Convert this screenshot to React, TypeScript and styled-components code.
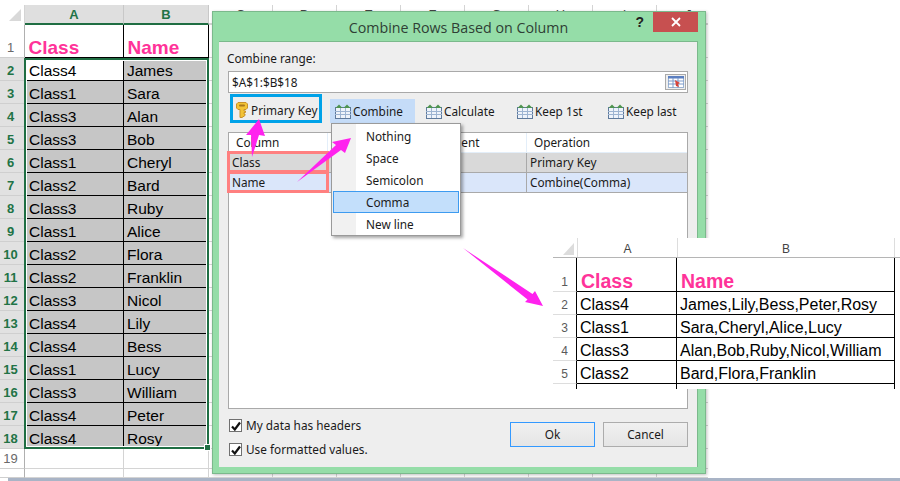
import React from 'react';
import styled, { createGlobalStyle } from 'styled-components';

const sheetRows = [
  ['Class4', 'James'], ['Class1', 'Sara'], ['Class3', 'Alan'], ['Class3', 'Bob'], ['Class1', 'Cheryl'],
  ['Class2', 'Bard'], ['Class3', 'Ruby'], ['Class1', 'Alice'], ['Class2', 'Flora'], ['Class2', 'Franklin'],
  ['Class3', 'Nicol'], ['Class4', 'Lily'], ['Class4', 'Bess'], ['Class1', 'Lucy'], ['Class3', 'William'],
  ['Class4', 'Peter'], ['Class4', 'Rosy'],
];
const resultRows = [
  ['Class4', 'James,Lily,Bess,Peter,Rosy'],
  ['Class1', 'Sara,Cheryl,Alice,Lucy'],
  ['Class3', 'Alan,Bob,Ruby,Nicol,William'],
  ['Class2', 'Bard,Flora,Franklin'],
];
const extraCols = ['C', 'D', 'E', 'F', 'G', 'H', 'I', 'J'];
const menuItems = ['Nothing', 'Space', 'Semicolon', 'Comma', 'New line'];

function TableIcon() {
  return (
    <svg width="16" height="16" viewBox="0 0 16 16">
      <rect x="0.5" y="4.5" width="15" height="11" fill="#eef3fa" stroke="#5f7a9c" />
      <path d="M0 8.5h16M0 11.5h16M5.5 5v10M10.5 5v10" stroke="#9db4d2" strokeWidth="1" />
      <path d="M0.5 5 L4 1.5 L7.5 5 Z M8.5 5 L12 1.5 L15.5 5 Z" fill="#4f9450" />
    </svg>
  );
}

function KeyIcon() {
  return (
    <svg width="12" height="16" viewBox="0 0 12 16">
      <path d="M0.5 2 L2 0.5 H10 L11.5 2 V6 L10 7.5 H8 V9 H9.5 V10.5 H8 V12 H9 V13.5 L6 15.5 H4 V7.5 H2 L0.5 6 Z" fill="#f2c335" stroke="#c8922a" strokeWidth="1" />
      <rect x="3" y="2.5" width="6" height="2" rx="1" fill="#a9781c" />
    </svg>
  );
}

function RangeIcon() {
  return (
    <svg width="16" height="12" viewBox="0 0 16 12">
      <rect x="0.5" y="0.5" width="15" height="11" fill="#fff" stroke="#9db4d2" />
      <rect x="0" y="0" width="16" height="2.5" fill="#5b7fc0" />
      <path d="M0 5h16M0 8h16M5 2v10M10 2v10" stroke="#7d9bcb" strokeWidth="1" />
      <path d="M7 4 L12 7 L10 8 L11 11 L8 10 Z" fill="#d8433a" />
    </svg>
  );
}

function CheckMark() {
  return (
    <svg width="10" height="10" viewBox="0 0 10 10">
      <path d="M1 5.5 L3.8 8.5 L9 1.5" fill="none" stroke="#111" strokeWidth="2.2" />
    </svg>
  );
}

export default function App() {
  return (
    <Page>
      <GlobalStyle />

      <Sheet>
        <SheetRow>
          <CornerCell />
          <ColHead $active>A</ColHead>
          <ColHead $active>B</ColHead>
          {extraCols.map(c => <ColHead key={c}>{c}</ColHead>)}
        </SheetRow>
        <SheetRow $height={33}>
          <RowHead>1</RowHead>
          <TitleCell>Class</TitleCell>
          <TitleCell>Name</TitleCell>
          {extraCols.map(c => <EmptyCell key={c} />)}
        </SheetRow>
        {sheetRows.map((row, i) => (
          <SheetRow key={i} $height={23}>
            <RowHead $active>{i + 2}</RowHead>
            <DataCell $plain={i === 0}>{row[0]}</DataCell>
            <DataCell $narrow>{row[1]}</DataCell>
            {extraCols.map(c => <EmptyCell key={c} />)}
          </SheetRow>
        ))}
        <SheetRow $height={20}>
          <RowHead>19</RowHead>
          <EmptyCell />
          <EmptyCell />
          {extraCols.map(c => <EmptyCell key={c} />)}
        </SheetRow>
        <SheetRow $height={9}>
          <RowHead />
          <EmptyCell />
          <EmptyCell />
          {extraCols.map(c => <EmptyCell key={c} />)}
        </SheetRow>
        <Selection />
      </Sheet>
      <BottomBar />

      <Dialog>
        <TitleBar>
          <span />
          <TitleText>Combine Rows Based on Column</TitleText>
          <Controls>
            <HelpMark>?</HelpMark>
            <CloseBtn>
              <svg width="10" height="10" viewBox="0 0 10 10">
                <path d="M1 1 L9 9 M9 1 L1 9" stroke="#fff" strokeWidth="1.8" />
              </svg>
            </CloseBtn>
          </Controls>
        </TitleBar>

        <Panel>
          <RangeLabel>Combine range:</RangeLabel>
          <RangeInput>
            <span>$A$1:$B$18</span>
            <RangeBtn><RangeIcon /></RangeBtn>
          </RangeInput>

          <Toolbar>
            <KeyButton><KeyIcon />Primary Key</KeyButton>
            <ToolButton $active>
              <TableIcon />Combine
              <Menu>
                {menuItems.map(item => (
                  <MenuItem key={item} $selected={item === 'Comma'}>{item}</MenuItem>
                ))}
              </Menu>
            </ToolButton>
            <ToolButton><TableIcon />Calculate</ToolButton>
            <ToolButton><TableIcon />Keep 1st</ToolButton>
            <ToolButton><TableIcon />Keep last</ToolButton>
          </Toolbar>

          <ListTable>
            <ListHead>
              <HeadCell>Column</HeadCell>
              <HeadCell />
              <HeadCell>Element</HeadCell>
              <HeadCell $last>Operation</HeadCell>
            </ListHead>
            <ListRow $tone="#d9d9d9">
              <RowCell>Class<Marker /></RowCell>
              <RowCell />
              <RowCell />
              <RowCell>Primary Key</RowCell>
            </ListRow>
            <ListRow $tone="#dae6fa">
              <RowCell>Name<Marker /></RowCell>
              <RowCell />
              <RowCell />
              <RowCell>Combine(Comma)</RowCell>
            </ListRow>
          </ListTable>

          <Footer>
            <Options>
              <OptionRow><CheckBox><CheckMark /></CheckBox>My data has headers</OptionRow>
              <OptionRow><CheckBox><CheckMark /></CheckBox>Use formatted values.</OptionRow>
            </Options>
            <Buttons>
              <DialogButton $focused>Ok</DialogButton>
              <DialogButton>Cancel</DialogButton>
            </Buttons>
          </Footer>
        </Panel>
      </Dialog>

      <Result>
        <ResultHead>
          <ResultCorner />
          <ResultCol>A</ResultCol>
          <ResultCol>B</ResultCol>
        </ResultHead>
        <ResultRow $height={34}>
          <ResultNum>1</ResultNum>
          <ResultTitle>Class</ResultTitle>
          <ResultTitle>Name</ResultTitle>
        </ResultRow>
        {resultRows.map((row, i) => (
          <ResultRow key={i} $height={23}>
            <ResultNum>{i + 2}</ResultNum>
            <ResultCell>{row[0]}</ResultCell>
            <ResultCell>{row[1]}</ResultCell>
          </ResultRow>
        ))}
        <ResultRow $height={5}>
          <ResultNum $open />
          <ResultCell $open />
          <ResultCell $open />
        </ResultRow>
      </Result>

      <Arrows viewBox="0 0 900 481">
        <polygon points="252,157 251,135 246,135 259,119 265,136 259,135" />
        <polygon points="297,182 336,145 332,142 351,138 345,153 341,150" />
        <polygon points="463,248 532.5,294 535,291 543,306 525,302 527.5,299.5" />
      </Arrows>
    </Page>
  );
}

const GlobalStyle = createGlobalStyle`
  html, body {
    margin: 0;
    padding: 0;
    background: #ffffff;
  }
`

const Page = styled.div`
  position: relative;
  width: 900px;
  height: 481px;
  overflow: hidden;
  background: #ffffff;
  font-family: "Liberation Sans", Arial, sans-serif;
`

const Sheet = styled.div`
  position: relative;
  width: 708px;
  height: 473px;
  padding-top: 5px;
  overflow: hidden;
`

const BottomBar = styled.div`
  height: 3px;
  margin-left: 8px;
  background: #a9b4c6;
`

const SheetRow = styled.div<{ $height?: number }>`
  display: grid;
  grid-template-columns: 25px 99px 85px repeat(8, 64px);
  height: ${p => (p.$height ? `${p.$height}px` : '20px')};
`

const CornerCell = styled.div`
  position: relative;
  background: #ffffff;
  border-right: 1px solid #d4d4d4;

  &::after {
    content: "";
    position: absolute;
    left: 9px;
    top: 4px;
    width: 12px;
    height: 12px;
    background: #d9d9d9;
    clip-path: polygon(100% 0, 100% 100%, 0 100%);
  }
`

const ColHead = styled.div<{ $active?: boolean }>`
  display: flex;
  align-items: center;
  justify-content: center;
  box-sizing: border-box;
  font-size: 13px;
  font-weight: ${p => (p.$active ? 'bold' : 'normal')};
  color: ${p => (p.$active ? '#217346' : '#444444')};
  background: ${p => (p.$active ? '#dfdfdf' : '#ffffff')};
  border-right: 1px solid ${p => (p.$active ? '#c8c8c8' : '#d4d4d4')};
  border-bottom: 2px solid ${p => (p.$active ? '#1f6e43' : '#d4d4d4')};
`

const RowHead = styled.div<{ $active?: boolean }>`
  display: flex;
  align-items: flex-end;
  justify-content: center;
  box-sizing: border-box;
  padding-right: 3px;
  font-size: 13px;
  line-height: 19px;
  font-weight: ${p => (p.$active ? 'bold' : 'normal')};
  color: ${p => (p.$active ? '#217346' : '#6a6a6a')};
  background: ${p => (p.$active ? '#e1e1e1' : '#ffffff')};
  border-right: 1px solid #b0b0b0;
  border-bottom: 1px solid #cfcfcf;
`

const TitleCell = styled.div`
  display: flex;
  align-items: flex-end;
  box-sizing: border-box;
  padding-left: 3.5px;
  font-size: 19px;
  font-weight: bold;
  line-height: 18px;
  color: #ff3399;
  background: #ffffff;
  border-right: 1px solid #000000;
  border-bottom: 1px solid #000000;
`

const DataCell = styled.div<{ $plain?: boolean; $narrow?: boolean }>`
  display: flex;
  align-items: center;
  box-sizing: border-box;
  padding-left: ${p => (p.$narrow ? '3px' : '4px')};
  padding-top: 4px;
  font-size: 15.5px;
  color: #000000;
  background: ${p => (p.$plain ? '#ffffff' : '#c6c6c6')};
  border-right: 1px solid #000000;
  border-bottom: 1px solid #000000;
`

const EmptyCell = styled.div`
  box-sizing: border-box;
  background: #ffffff;
  border-right: 1px solid #d4d4d4;
  border-bottom: 1px solid #d4d4d4;
`

const Selection = styled.div`
  position: absolute;
  left: 24px;
  top: 58px;
  width: 185px;
  height: 391px;
  box-sizing: border-box;
  border: 2px solid #1f6e43;
  box-shadow: inset 0 0 0 1px #ffffff;

  &::after {
    content: "";
    position: absolute;
    right: -4px;
    bottom: -4px;
    width: 5px;
    height: 5px;
    background: #1f6e43;
    border: 1px solid #ffffff;
  }
`

const Dialog = styled.div`
  position: absolute;
  left: 212px;
  top: 11px;
  width: 494px;
  height: 463px;
  box-sizing: border-box;
  padding: 0 7px 6px 6px;
  display: flex;
  flex-direction: column;
  background: #95dda8;
  border: 1px solid #7bb98c;
  box-shadow: 1px 1px 3px rgba(0, 0, 0, 0.25);
  font-family: "Noto Sans", sans-serif;
  font-size: 11.8px;
  color: #1a1a1a;
`

const TitleBar = styled.div`
  display: grid;
  grid-template-columns: 1fr auto 1fr;
  align-items: center;
  height: 29px;
  flex: none;
`

const TitleText = styled.div`
  font-family: "Open Sans", sans-serif;
  font-size: 14.25px;
  color: #2f3f35;
  padding-top: 1px;
`

const Controls = styled.div`
  justify-self: end;
  align-self: start;
  display: flex;
  align-items: center;
`

const HelpMark = styled.div`
  font-family: "Liberation Sans", sans-serif;
  font-size: 14px;
  font-weight: bold;
  color: #222222;
  margin-right: 9px;
`

const CloseBtn = styled.div`
  display: flex;
  align-items: center;
  justify-content: center;
  width: 45px;
  height: 20px;
  background: #c75050;
`

const Panel = styled.div`
  flex: 1;
  display: flex;
  flex-direction: column;
  box-sizing: border-box;
  padding: 0 9px;
  background: #eeeeee;
  border-top: 1px solid #7bb98c;
  border-right: 1px solid #7bb98c;
  min-height: 0;
`

const RangeLabel = styled.div`
  margin-top: 8px;
  margin-left: -1px;
  height: 21px;
  line-height: 16px;
`

const RangeInput = styled.div`
  display: flex;
  align-items: center;
  justify-content: space-between;
  box-sizing: border-box;
  height: 22px;
  padding: 0 1px 0 3px;
  background: #ffffff;
  border: 1px solid #a9a9a9;
`

const RangeBtn = styled.div`
  display: flex;
  align-items: center;
  justify-content: center;
  width: 21px;
  height: 16px;
  box-sizing: border-box;
  border: 1px solid #aaaaaa;
  background: #eeeeee;
`

const Toolbar = styled.div`
  display: flex;
  align-items: flex-start;
  gap: 6px;
  margin-top: 1px;
  height: 38px;
  flex: none;
`

const KeyButton = styled.div`
  display: flex;
  align-items: center;
  gap: 3px;
  box-sizing: border-box;
  width: 92px;
  height: 29px;
  margin: 0 2px 0 2px;
  padding: 2px 0 0 3px;
  border: 3px solid #00a2e8;
  white-space: nowrap;
`

const ToolButton = styled.div<{ $active?: boolean }>`
  position: relative;
  display: flex;
  align-items: center;
  gap: 2px;
  box-sizing: border-box;
  width: 85px;
  height: 24px;
  margin-top: 5px;
  padding: 0 0 1px 5px;
  background: ${p => (p.$active ? '#c5dcf8' : 'transparent')};
  white-space: nowrap;
`

const Menu = styled.div`
  position: absolute;
  left: 1px;
  top: 24px;
  z-index: 3;
  width: 130px;
  height: 113px;
  box-sizing: border-box;
  padding: 1px;
  border: 1px solid #9a9a9a;
  background: linear-gradient(to right, #f1f1f1 0, #f1f1f1 24px, #ffffff 24px);
  box-shadow: 2px 2px 3px rgba(0, 0, 0, 0.35);
`

const MenuItem = styled.div<{ $selected?: boolean }>`
  display: flex;
  align-items: center;
  box-sizing: border-box;
  height: 22px;
  padding: 0 0 1px 32px;
  background: ${p => (p.$selected ? '#c3dffb' : 'transparent')};
  border: 1px solid ${p => (p.$selected ? '#3d9bf0' : 'transparent')};
`

const ListTable = styled.div`
  flex: none;
  height: 277px;
  box-sizing: border-box;
  background: #ffffff;
  border: 1px solid #a9a9a9;
`

const ListHead = styled.div`
  display: grid;
  grid-template-columns: 99px 99px 100px 1fr;
  height: 19px;
  background: #ffffff;
  border-bottom: 1px solid #e3eef9;
`

const HeadCell = styled.div<{ $last?: boolean }>`
  display: flex;
  align-items: center;
  padding: 0 0 2px 7px;
  border-right: ${p => (p.$last ? 'none' : '1px solid #e3eef9')};
`

const ListRow = styled.div<{ $tone: string }>`
  display: grid;
  grid-template-columns: 99px 99px 100px 1fr;
  height: 20px;
  box-sizing: border-box;
  background: ${p => p.$tone};
  border-bottom: 1px solid #a9a9a9;
`

const RowCell = styled.div`
  position: relative;
  display: flex;
  align-items: center;
  padding: 0 0 2px 3px;
  border-right: 1px solid #a9a9a9;
  &:last-child {
    border-right: none;
  }
`

const Marker = styled.div`
  position: absolute;
  left: -2px;
  top: -2px;
  width: 102px;
  height: 22px;
  box-sizing: border-box;
  border: 3px solid #ff8080;
`

const Footer = styled.div`
  flex: 1;
  display: flex;
  justify-content: space-between;
`

const Options = styled.div`
  display: flex;
  flex-direction: column;
  gap: 11px;
  padding-top: 9px;
  margin-left: 1px;
`

const OptionRow = styled.div`
  display: flex;
  align-items: center;
  gap: 4px;
  height: 13px;
`

const CheckBox = styled.div`
  display: flex;
  align-items: center;
  justify-content: center;
  width: 13px;
  height: 13px;
  margin-top: 2px;
  box-sizing: border-box;
  background: #ffffff;
  border: 1px solid #707070;
`

const Buttons = styled.div`
  display: flex;
  gap: 8px;
  padding-top: 13px;
`

const DialogButton = styled.div<{ $focused?: boolean }>`
  display: flex;
  align-items: center;
  justify-content: center;
  width: 85px;
  height: 25px;
  box-sizing: border-box;
  padding-bottom: 2px;
  background: linear-gradient(#f0f0f0, #e5e5e5);
  border: 1px solid ${p => (p.$focused ? '#3399ff' : '#acacac')};
`

const Result = styled.div`
  position: absolute;
  left: 553px;
  top: 238px;
  width: 347px;
  height: 151px;
  background: #ffffff;
  overflow: hidden;
`

const ResultHead = styled.div`
  display: grid;
  grid-template-columns: 24px 100px 218px;
  height: 20px;
  box-sizing: border-box;
  border-bottom: 1px solid #b5b5b5;
`

const ResultCorner = styled.div`
  position: relative;

  &::after {
    content: "";
    position: absolute;
    left: 10px;
    top: 5px;
    width: 11px;
    height: 12px;
    background: #dcdcdc;
    clip-path: polygon(100% 0, 100% 100%, 0 100%);
  }
`

const ResultCol = styled.div`
  display: flex;
  align-items: center;
  justify-content: center;
  padding-top: 2px;
  font-size: 12px;
  color: #444444;
  border-left: 1px solid #dddddd;
  &:last-child {
    border-right: 1px solid #dddddd;
  }
`

const ResultRow = styled.div<{ $height: number }>`
  display: grid;
  grid-template-columns: 24px 100px 218px;
  height: ${p => p.$height}px;
`

const ResultNum = styled.div<{ $open?: boolean }>`
  display: flex;
  align-items: flex-end;
  justify-content: center;
  box-sizing: border-box;
  font-size: 12px;
  line-height: 17px;
  color: #5a5a5a;
  border-right: 1px solid #000000;
  border-bottom: ${p => (p.$open ? 'none' : '1px solid #dddddd')};
`

const ResultTitle = styled(TitleCell)`
  padding-left: 4px;
  font-size: 19.5px;
  line-height: 20px;
`

const ResultCell = styled.div<{ $open?: boolean }>`
  display: flex;
  align-items: center;
  box-sizing: border-box;
  padding-left: 3px;
  padding-top: 3px;
  font-size: 16px;
  color: #000000;
  border-right: 1px solid #000000;
  border-bottom: ${p => (p.$open ? 'none' : '1px solid #000000')};
`

const Arrows = styled.svg`
  position: absolute;
  left: 0;
  top: 0;
  width: 900px;
  height: 481px;
  z-index: 5;
  pointer-events: none;
  fill: #ff22ee;
`
